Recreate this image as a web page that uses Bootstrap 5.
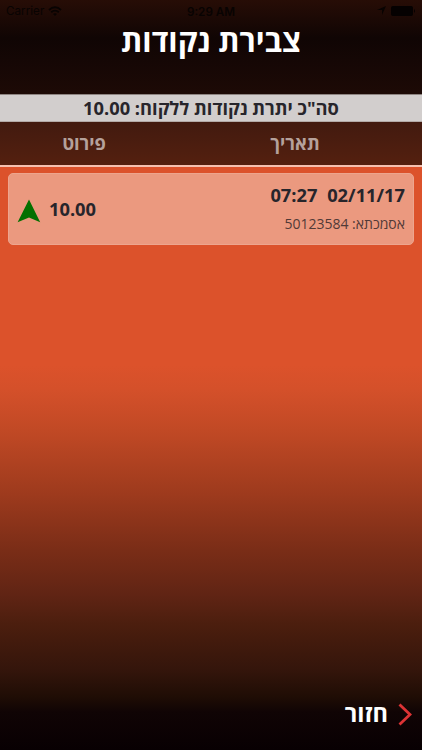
<!DOCTYPE html>
<html lang="he" dir="rtl">
<head>
<meta charset="utf-8">
<meta name="viewport" content="width=device-width, initial-scale=1">
<title>צבירת נקודות</title>
<link href="https://cdn.jsdelivr.net/npm/bootstrap@5.3.0/dist/css/bootstrap.min.css" rel="stylesheet">
<style>
body{font-family:"Open Sans","Noto Sans",sans-serif;color:#27252b;height:750px;overflow:hidden;
background:linear-gradient(#dc522b 0,#dc522b 365px,#d4502a 390px,#c14925 430px,#9d3a1d 495px,#7a2d17 550px,#602414 595px,#4b1e0e 625px,#34150b 670px,#1f0d05 697px,#100405 712px,#080002 750px)}
.top-bar{height:94px;background:linear-gradient(#270d06,#100504 38px,#150705 60px,#1d0a06)}
.status{height:20px;font:11.7px/22px Inter,"Liberation Sans",sans-serif;color:#080302;padding:1px 6px 0}
.status>*{flex:1}
.page-title{font-size:30.5px;line-height:44px;color:#fff;margin-top:-2px}
.total{height:28px;line-height:26px;font-size:18.3px;background:#d2cecd;border-top:1px solid #8d8481;border-bottom:1px solid #b3aaa7}
.heads{height:45px;background:linear-gradient(#421a0f,#54200f);border-bottom:2px solid #f6c1b0;color:#b5a19b;font-size:18.3px;line-height:42px}
.heads .date-col{width:254px}.heads .detail-col{width:168px}
.entry{margin:6px 8px 0;height:72px;border-radius:5px;background:#eb997f;padding:0 8px;border:1px solid #eda58e}
.when{font-size:18.3px;line-height:24px;word-spacing:5px}
.ref-no{font-size:14px;line-height:20px;margin-top:7px;margin-bottom:1px;color:#513a37}
.points{font-size:18.3px;line-height:24px}
.back-bar{height:58px;color:#fff;font-size:23.6px;line-height:32px;padding:4px 10px 0;gap:10px}
.chevron{margin-top:7px}
.back-label{padding-top:1px}
</style>
<script src="https://cdn.jsdelivr.net/npm/bootstrap@5.3.0/dist/js/bootstrap.bundle.min.js"></script>
</head>
<body class="d-flex flex-column">
<header class="top-bar">
  <div class="status d-flex" dir="ltr">
    <div class="d-flex align-items-center gap-1"><span>Carrier</span>
      <svg width="14" height="10" viewBox="0 0 14 10" fill="none" stroke="#080302" stroke-width="1.8"><path d="M1 4Q7-1.5 13 4M3.2 6.2Q7 3 10.8 6.2"/><path d="M5 8Q7 6.6 9 8L7 10z" fill="#080302" stroke="none"/></svg></div>
    <div class="text-center fw-semibold">9:29 AM</div>
    <div class="d-flex align-items-center justify-content-end gap-1">
      <svg width="9" height="9" viewBox="0 0 9 9"><path d="M9 0L5 9V4H0z" fill="#080302"/></svg>
      <svg width="26" height="10" viewBox="0 0 26 10" fill="#050101"><rect x="1" width="22" height="10" rx="2"/><path d="M24 3q2 2 0 4z"/></svg></div>
  </div>
  <h1 class="page-title fw-bold text-center mb-0">צבירת נקודות</h1>
</header>
<div class="total fw-bold text-center">סה"כ יתרת נקודות ללקוח: 10.00</div>
<div class="heads d-flex fw-bold text-center"><div class="date-col">תאריך</div><div class="detail-col">פירוט</div></div>
<main class="flex-grow-1">
  <div class="entry d-flex justify-content-between align-items-center">
    <div><div class="when fw-bold"><bdi>02/11/17</bdi> <bdi>07:27</bdi></div><div class="ref-no">אסמכתא: 50123584</div></div>
    <div class="d-flex align-items-center gap-2"><span class="points fw-bold">10.00</span>
      <svg class="mt-1" width="24" height="24" viewBox="0 0 24 24"><path d="M12 .5L23.2 23.3L12 18.5L.6 23.3z" fill="#047000"/></svg></div>
  </div>
</main>
<footer class="back-bar d-flex align-items-start">
  <svg class="chevron" width="14" height="24" viewBox="0 0 14 24" fill="none" stroke="#dc3335" stroke-width="2.8"><path d="M1.5 1.5L12 11.5L1.5 21.5"/></svg>
  <span class="back-label fw-bold">חזור</span>
</footer>
</body>
</html>
